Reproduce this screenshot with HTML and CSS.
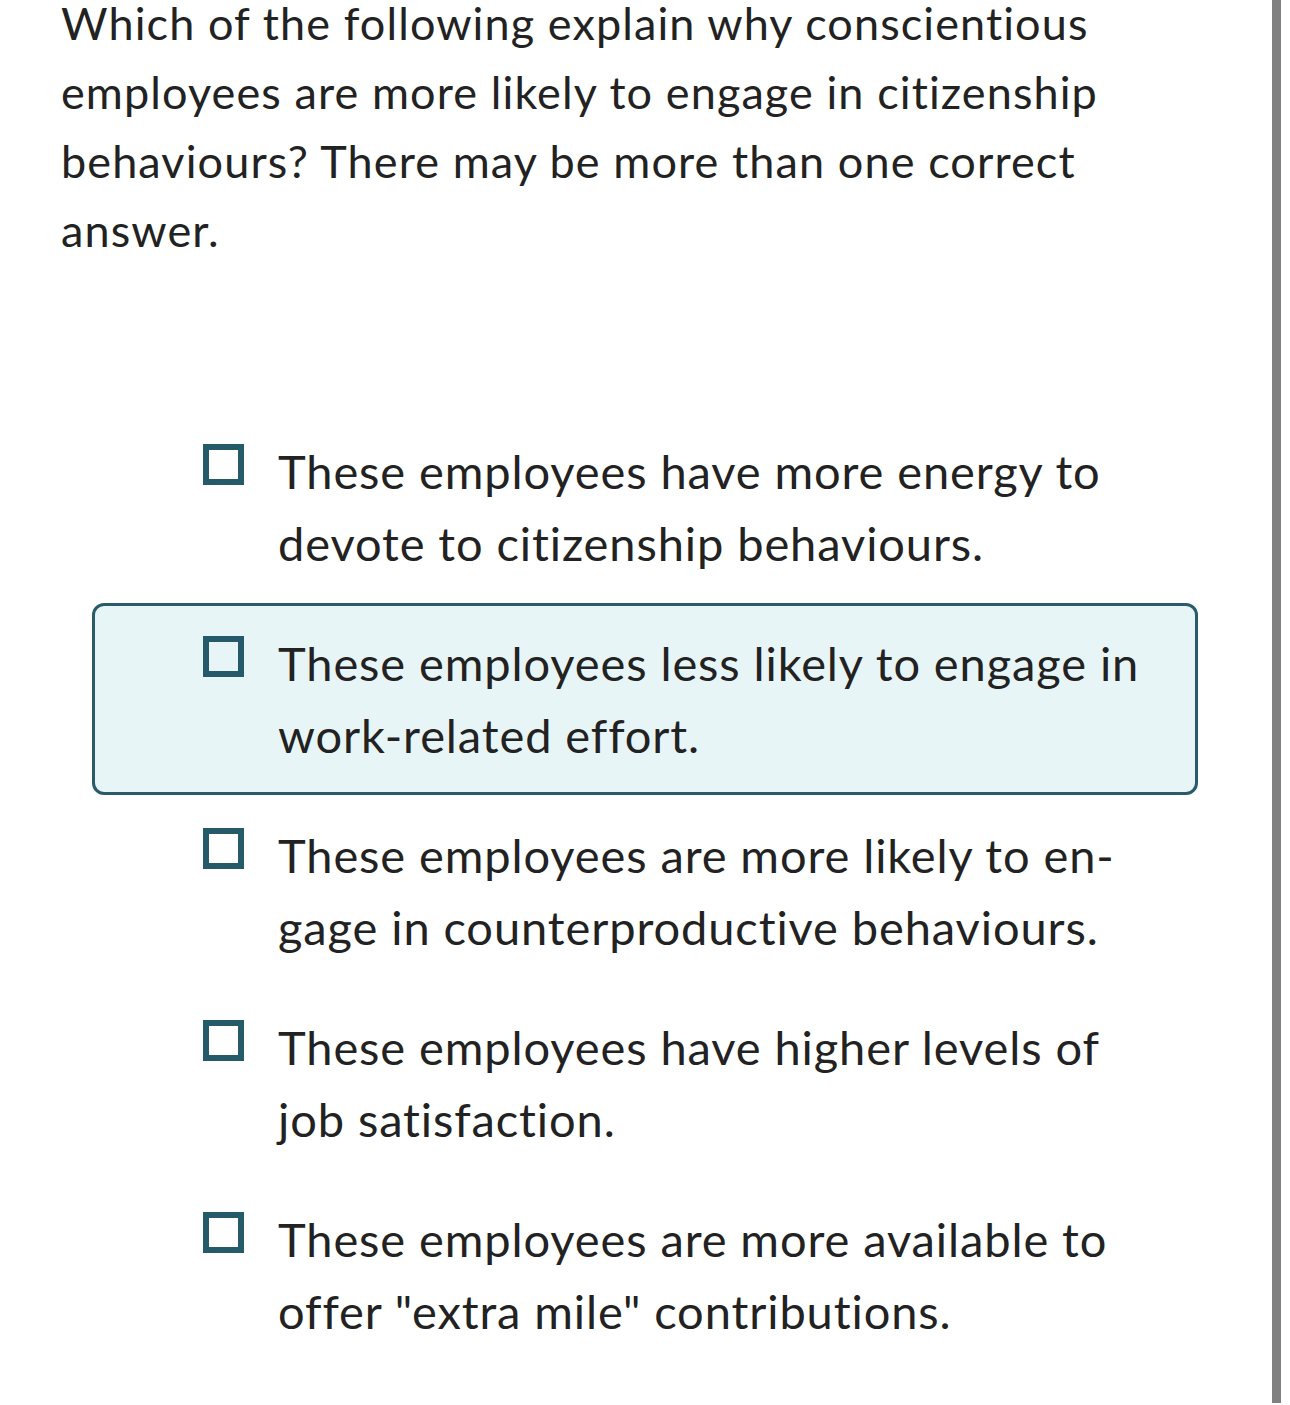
FILE: index.html
```html
<!DOCTYPE html>
<html lang="en">
<head>
<meta charset="utf-8">
<title>Question</title>
<link rel="stylesheet" href="styles.css">
</head>
<body>
<div class="page">
  <main class="content">
    <p class="question">Which of the following explain why conscientious<br>employees are more likely to engage in citizenship<br>behaviours? There may be more than one correct<br>answer.</p>
    <ul class="options">
      <li class="option"><span class="box"></span><span class="label">These employees have more energy to<br>devote to citizenship behaviours.</span></li>
      <li class="option selected"><span class="box"></span><span class="label">These employees less likely to engage in<br>work-related effort.</span></li>
      <li class="option"><span class="box"></span><span class="label">These employees are more likely to en-<br>gage in counterproductive behaviours.</span></li>
      <li class="option"><span class="box"></span><span class="label">These employees have higher levels of<br>job satisfaction.</span></li>
      <li class="option"><span class="box"></span><span class="label">These employees are more available to<br>offer "extra mile" contributions.</span></li>
    </ul>
  </main>
  <div class="scrollbar"></div>
</div>
</body>
</html>
```

FILE: styles.css
```css
html, body {
  margin: 0;
  padding: 0;
  background: #ffffff;
}

body {
  font-family: "Lato", "Liberation Sans", sans-serif;
  font-variant-ligatures: none;
  color: #222222;
}

.page {
  display: flex;
  width: 1290px;
  height: 1405px;
  overflow: hidden;
}

.content {
  flex: 1;
  display: flex;
  flex-direction: column;
}

.question {
  margin: -11px 0 0 61px;
  font-size: 45px;
  letter-spacing: 1.1px;
  line-height: 69px;
  white-space: nowrap;
}

.options {
  list-style: none;
  margin: 146px 0 0 92px;
  padding: 0;
  width: 1106px;
  display: flex;
  flex-direction: column;
  gap: 0;
}

.option {
  display: flex;
  align-items: flex-start;
  gap: 34px;
  padding: 21px 0 21px 108px;
  border: 3px solid transparent;
  border-radius: 12px;
  font-size: 47px;
  letter-spacing: 0.9px;
  line-height: 72px;
  white-space: nowrap;
}

.option.selected {
  border-color: #2a5b6b;
  background: #e8f5f6;
}

.box {
  flex: none;
  width: 41px;
  height: 41px;
  box-sizing: border-box;
  border: 6px solid #255a6a;
  margin-top: 9px;
}

.scrollbar {
  flex: none;
  width: 9px;
  height: 1403px;
  margin-right: 9px;
  background: #808080;
}
```
